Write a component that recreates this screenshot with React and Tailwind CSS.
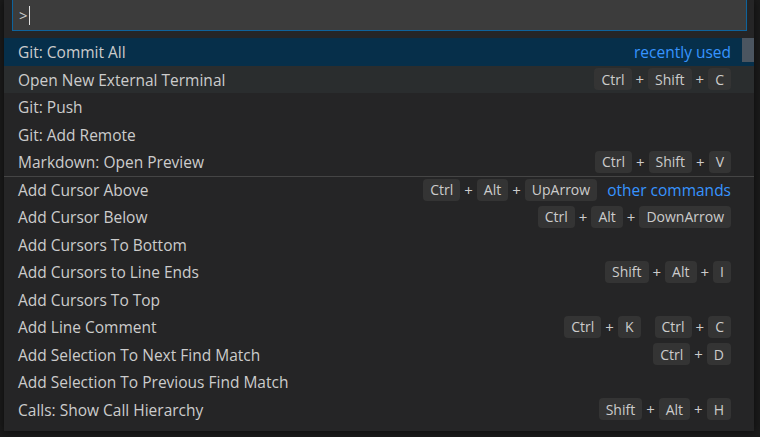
import { Fragment } from 'react'

const items = [
  { label: 'Git: Commit All', tag: 'recently used', selected: true },
  { label: 'Open New External Terminal', keys: [['Ctrl', 'Shift', 'C']], hover: true },
  { label: 'Git: Push' },
  { label: 'Git: Add Remote' },
  { label: 'Markdown: Open Preview', keys: [['Ctrl', 'Shift', 'V']] },
  { label: 'Add Cursor Above', keys: [['Ctrl', 'Alt', 'UpArrow']], tag: 'other commands', separator: true },
  { label: 'Add Cursor Below', keys: [['Ctrl', 'Alt', 'DownArrow']] },
  { label: 'Add Cursors To Bottom' },
  { label: 'Add Cursors to Line Ends', keys: [['Shift', 'Alt', 'I']] },
  { label: 'Add Cursors To Top' },
  { label: 'Add Line Comment', keys: [['Ctrl', 'K'], ['Ctrl', 'C']] },
  { label: 'Add Selection To Next Find Match', keys: [['Ctrl', 'D']] },
  { label: 'Add Selection To Previous Find Match' },
  { label: 'Calls: Show Call Hierarchy', keys: [['Shift', 'Alt', 'H']] },
]

function Keys({ chords }) {
  return (
    <div className="flex items-center gap-[14px]">
      {chords.map((chord, i) => (
        <div key={i} className="flex items-center">
          {chord.map((k, j) => (
            <Fragment key={j}>
              {j > 0 && <span className="px-[4px] text-[#cccccc] text-[15px]">+</span>}
              <span className="h-[22px] px-[7px] flex items-center rounded-[4px] bg-[#343434] text-[#cccccc] text-[14px]">
                {k}
              </span>
            </Fragment>
          ))}
        </div>
      ))}
    </div>
  )
}

export default function App() {
  return (
    <div
      className="w-[760px] h-[437px] overflow-hidden bg-[#1b1b1b] pl-[4px]"
      style={{ fontFamily: '"Open Sans", "Noto Sans", sans-serif' }}
    >
      <div className="relative w-[750px] h-[431px] bg-[#252526] shadow-[0_0_8px_rgba(0,0,0,0.6)]">
        {/* Input */}
        <div className="pl-[8px] pr-[7px]">
          <div className="h-[31px] bg-[#3c3c3c] border-x border-b border-[#0e639c] flex items-center pl-[6px]">
            <span className="text-[#cccccc] text-[15px] leading-none">&gt;</span>
            <span className="w-px h-[19px] bg-[#e0e0e0] ml-[1px]" />
          </div>
        </div>

        {/* List */}
        <div className="pt-[7px]">
          {items.map((it) => (
            <div
              key={it.label}
              className={
                'h-[27.5px] flex items-center pl-[14px] pr-[23px] text-[15.5px] text-[#cccccc] ' +
                (it.selected ? 'bg-[#062f4a] ' : it.hover ? 'bg-[#2a2d2e] ' : '') +
                (it.separator ? 'border-t border-[#454545]' : '')
              }
            >
              <span className="flex-1 whitespace-nowrap pt-[2px]">{it.label}</span>
              {it.keys && <Keys chords={it.keys} />}
              {it.tag && <span className="ml-[10px] pt-[2px] text-[#3794ff]">{it.tag}</span>}
            </div>
          ))}
        </div>

        {/* Scrollbar slider */}
        <div className="absolute right-0 top-[38px] w-[12px] h-[24px] bg-[#4b5560]" />
      </div>
    </div>
  )
}
